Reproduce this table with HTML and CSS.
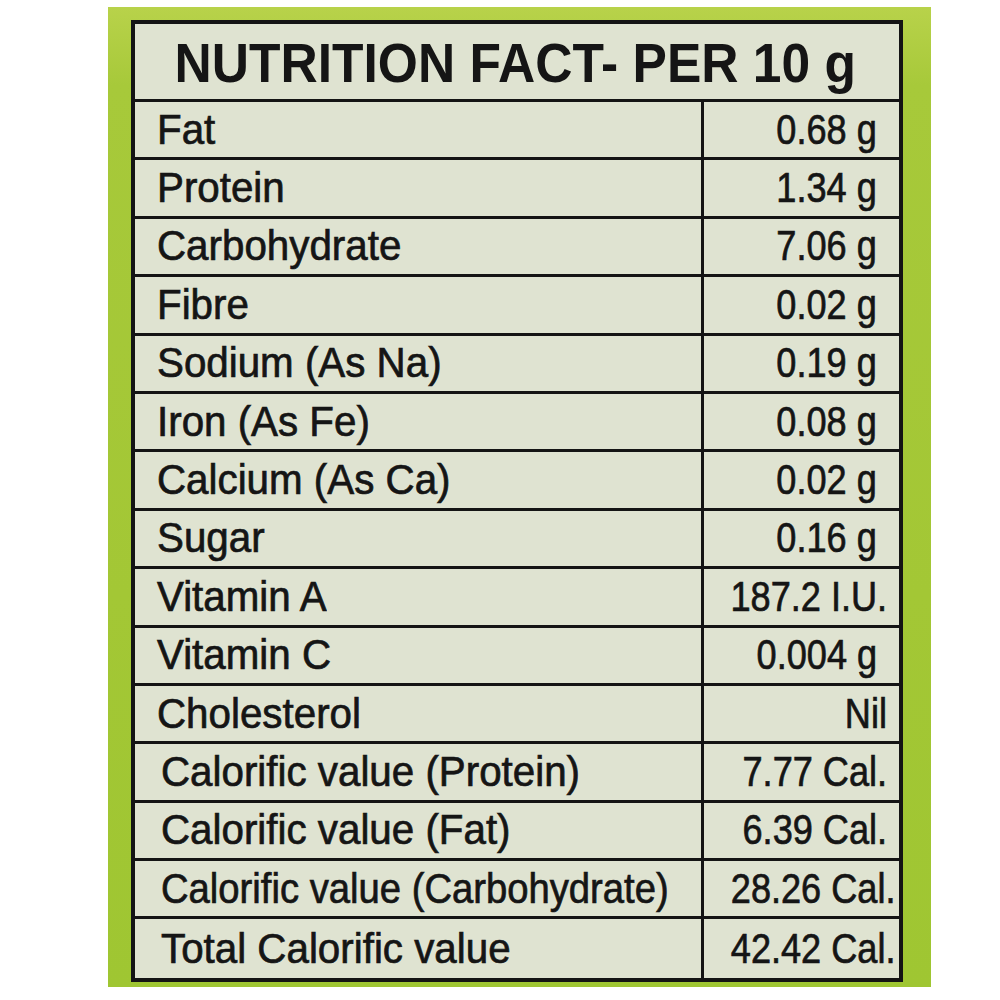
FILE: index.html
```html
<!DOCTYPE html>
<html>
<head>
<meta charset="utf-8">
<link rel="stylesheet" href="styles.css">
</head>
<body>
<div class="page">
  <div class="panel">
    <div class="facts">
      <div class="title"><span>NUTRITION FACT- PER 10 g</span></div>
      <div class="row"><div class="label"><span>Fat</span></div><div class="value"><span>0.68 g</span></div></div>
      <div class="row"><div class="label"><span>Protein</span></div><div class="value"><span>1.34 g</span></div></div>
      <div class="row"><div class="label"><span>Carbohydrate</span></div><div class="value"><span>7.06 g</span></div></div>
      <div class="row"><div class="label"><span>Fibre</span></div><div class="value"><span>0.02 g</span></div></div>
      <div class="row"><div class="label"><span>Sodium (As Na)</span></div><div class="value"><span>0.19 g</span></div></div>
      <div class="row"><div class="label"><span>Iron (As Fe)</span></div><div class="value"><span>0.08 g</span></div></div>
      <div class="row"><div class="label"><span>Calcium (As Ca)</span></div><div class="value"><span>0.02 g</span></div></div>
      <div class="row"><div class="label"><span>Sugar</span></div><div class="value"><span>0.16 g</span></div></div>
      <div class="row"><div class="label"><span>Vitamin A</span></div><div class="value value--wide"><span>187.2 I.U.</span></div></div>
      <div class="row"><div class="label"><span>Vitamin C</span></div><div class="value"><span>0.004 g</span></div></div>
      <div class="row"><div class="label"><span>Cholesterol</span></div><div class="value value--wide"><span>Nil</span></div></div>
      <div class="row"><div class="label label--shift"><span>Calorific value (Protein)</span></div><div class="value value--wide"><span>7.77 Cal.</span></div></div>
      <div class="row"><div class="label label--shift"><span>Calorific value (Fat)</span></div><div class="value value--wide"><span>6.39 Cal.</span></div></div>
      <div class="row"><div class="label label--shift label--narrow"><span>Calorific value (Carbohydrate)</span></div><div class="value value--wide"><span>28.26 Cal.</span></div></div>
      <div class="row"><div class="label label--shift"><span>Total Calorific value</span></div><div class="value value--wide"><span>42.42 Cal.</span></div></div>
    </div>
  </div>
</div>
</body>
</html>
```
FILE: styles.css
```css
html, body {
  margin: 0;
  padding: 0;
  background: #ffffff;
}
body {
  font-family: "Liberation Sans", Arial, sans-serif;
  color: #151515;
}
.page {
  padding: 7px 0 0 108px;
}
.panel {
  width: 823px;
  height: 980px;
  box-sizing: border-box;
  background: linear-gradient(180deg, #b8d24a 0%, #a7c93a 8%, #a3c735 60%, #9fc632 100%);
  padding: 13px 28px 5px 23px;
}
.facts {
  border: 4px solid #141414;
  background: #dfe3d1;
}
.title {
  height: 78px;
  box-sizing: border-box;
  border-bottom: 3px solid #141414;
  display: flex;
  align-items: center;
  justify-content: center;
  font-weight: 700;
  font-size: 56px;
  padding-top: 2px;
  padding-right: 4px;
}
.title span {
  display: inline-block;
  transform: scaleX(0.92);
}
.row {
  display: grid;
  grid-template-columns: 566px 1fr;
  height: 58.4px;
  box-sizing: border-box;
  border-bottom: 3px solid #141414;
}
.row:last-child {
  border-bottom: none;
}
.label, .value {
  display: flex;
  align-items: center;
  font-size: 42px;
  white-space: nowrap;
  -webkit-text-stroke: 0.7px #151515;
}
.label {
  padding-left: 22px;
}
.label span {
  display: inline-block;
  transform: scaleX(0.96);
  transform-origin: left center;
}
.label--shift {
  padding-left: 26px;
}
.label--narrow span {
  transform: scaleX(0.91);
}
.value {
  border-left: 3px solid #141414;
  justify-content: flex-end;
  padding-right: 22px;
}
.value--wide {
  padding-right: 12px;
}
.value span {
  display: inline-block;
  transform: scaleX(0.86);
  transform-origin: right center;
}
```
